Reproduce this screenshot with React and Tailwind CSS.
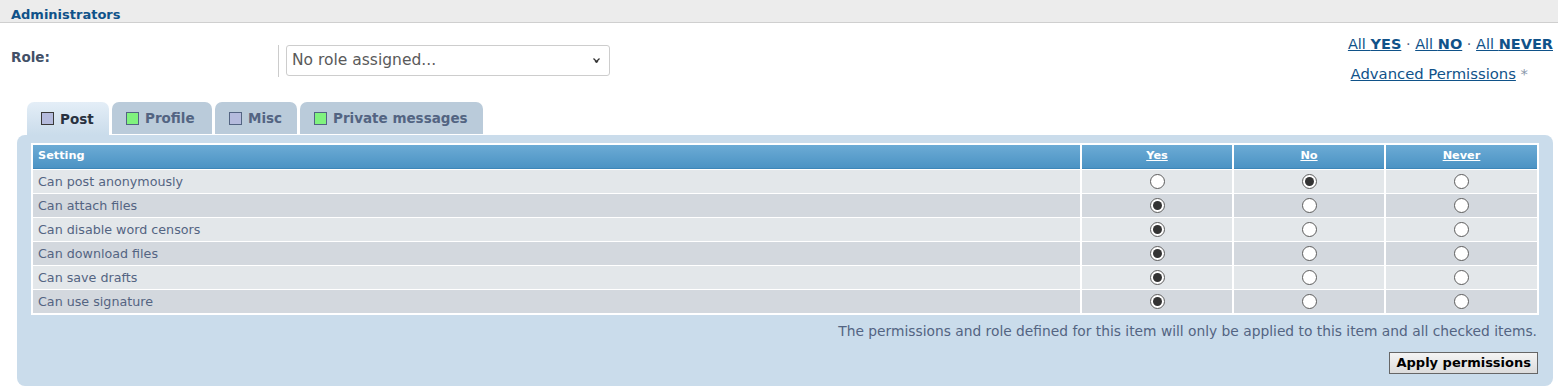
import React from 'react';

const tabs = [
  { label: 'Post', color: 'bg-[#b5bbdd]', border: 'border-[#3a3a3a]', active: true, w: 'w-[82px]' },
  { label: 'Profile', color: 'bg-[#80f27e]', border: 'border-[#536482]', w: 'w-[100px]' },
  { label: 'Misc', color: 'bg-[#b5bbdd]', border: 'border-[#536482]', w: 'w-[82px]' },
  { label: 'Private messages', color: 'bg-[#80f27e]', border: 'border-[#536482]', w: 'w-[183px]' },
];

// 0 = yes, 1 = no, 2 = never
const rows = [
  ['Can post anonymously', 1],
  ['Can attach files', 0],
  ['Can disable word censors', 0],
  ['Can download files', 0],
  ['Can save drafts', 0],
  ['Can use signature', 0],
];

const Radio = ({ checked }) => (
  <span className="inline-flex items-center justify-center w-[15px] h-[15px] rounded-full border border-[#5c5c5c] bg-white">
    {checked && <span className="w-[9px] h-[9px] rounded-full bg-[#333333]" />}
  </span>
);

const App = () => {
  return (
    <div className="w-[1558px] h-[392px] bg-white font-['DejaVu_Sans','Verdana',sans-serif] overflow-hidden">
      {/* title bar */}
      <div className="h-[23px] bg-[#ececec] border-b border-[#cfcfcf] px-[11px] pt-[7px]">
        <span className="block text-[13px] font-bold text-[#105289] leading-[16px]">Administrators</span>
      </div>

      {/* role + quick links */}
      <div className="h-[79px] flex justify-between items-start px-[5px]">
        <div className="flex items-start mt-[22px] pl-[6px]">
          <div className="w-[267px] text-[13.5px] font-bold text-[#425067] leading-[16px] mt-[4px]">Role:</div>
          <div className="border-l border-[#cccccc] h-[32px] pl-[7px]">
            <div className="w-[324px] h-[31px] border border-[#cdcdcd] rounded-[3px] bg-white flex items-center justify-between pl-[5px] pr-[9px]">
              <span className="text-[15.5px] text-[#5a5a5a]">No role assigned...</span>
              <svg width="7" height="6" viewBox="0 0 7 6">
                <path d="M0.5 0.5 L3.5 3.5 L6.5 0.5" fill="none" stroke="#333" strokeWidth="1.3" />
                <path d="M2 3 L3.5 5 L5 3" fill="none" stroke="#333" strokeWidth="1" />
              </svg>
            </div>
          </div>
        </div>
        <div className="text-right text-[#105289] leading-[18px] mt-[12px]">
          <div className="text-[14.5px]">
            <a className="underline" href="#">All <b>YES</b></a>
            <span className="text-[#536482]"> · </span>
            <a className="underline" href="#">All <b>NO</b></a>
            <span className="text-[#536482]"> · </span>
            <a className="underline" href="#">All <b>NEVER</b></a>
          </div>
          <div className="mt-[12px] pr-[25px] text-[14.8px]">
            <a className="underline" href="#">Advanced Permissions</a>
            <span className="text-[#8a97ab]"> *</span>
          </div>
        </div>
      </div>

      <div className="pl-[17px] pr-[5px]">
        {/* tabs */}
        <div className="flex items-start gap-[3px] pl-[10px] h-[33px]">
          {tabs.map((t) => (
            <div
              key={t.label}
              className={`${t.w} flex items-center gap-[6px] pl-[14px] rounded-t-[7px] ${
                t.active
                  ? 'h-[33px] bg-linear-to-b from-[#e4eef7] to-[#cadceb] text-[#28313f]'
                  : 'h-[32px] bg-[#bacbda] text-[#536482]'
              }`}
            >
              <span className={`w-[13px] h-[13px] border ${t.border} ${t.color} shrink-0`} />
              <span className="text-[13.5px] font-bold leading-[16px] whitespace-nowrap">{t.label}</span>
            </div>
          ))}
        </div>

        {/* panel */}
        <div className="bg-[#cadceb] rounded-[8px] pt-[8px] px-[14px] pb-[12px]">
          <div className="bg-white p-[2px]">
            <div className="grid grid-cols-[1fr_150px_150px_151px] gap-x-[2px] gap-y-[1px]">
              <div className="h-[24px] bg-linear-to-b from-[#6cabd5] to-[#4b93c4] border-b border-[#3e86b8] flex items-center pl-[5px] text-white text-[11.3px] font-bold">
                Setting
              </div>
              {['Yes', 'No', 'Never'].map((h) => (
                <div
                  key={h}
                  className="h-[24px] bg-linear-to-b from-[#6cabd5] to-[#4b93c4] border-b border-[#3e86b8] flex items-center justify-center text-white text-[11.3px] font-bold underline"
                >
                  {h}
                </div>
              ))}
              {rows.map(([label, val], i) => {
                const bg = i % 2 === 0 ? 'bg-[#e3e7ea]' : 'bg-[#d3d8de]';
                return (
                  <React.Fragment key={label}>
                    <div className={`h-[23px] ${bg} flex items-center pl-[5px] text-[12.7px] text-[#536482]`}>{label}</div>
                    {[0, 1, 2].map((c) => (
                      <div key={c} className={`h-[23px] ${bg} flex items-center justify-center`}>
                        <Radio checked={val === c} />
                      </div>
                    ))}
                  </React.Fragment>
                );
              })}
            </div>
          </div>

          <p className="mt-[8px] pr-[2px] text-right text-[13.8px] leading-[16px] text-[#536482]">
            The permissions and role defined for this item will only be applied to this item and all checked items.
          </p>

          <div className="flex justify-end mt-[13px]">
            <button className="h-[22px] px-[6px] border border-[#666666] bg-linear-to-b from-[#f4f4f4] to-[#dcdcdc] text-[13px] font-bold text-black leading-[18px] mr-[1px]">
              Apply permissions
            </button>
          </div>
        </div>
      </div>
    </div>
  );
};

export default App;
